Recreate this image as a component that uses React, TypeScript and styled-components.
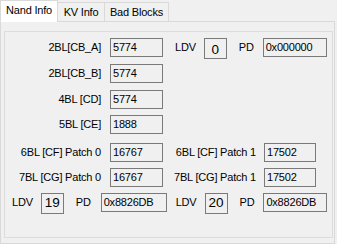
import React from "react";
import styled, { createGlobalStyle } from "styled-components";

const Global = createGlobalStyle`
  html, body { margin: 0; padding: 0; background: #f0f0f0; }
  body { font-family: "Liberation Sans", Arial, sans-serif; font-size: 11px; color: #000; letter-spacing: -0.2px; }
`;

const Window = styled.div`
  width: 337px;
  height: 244px;
  background: #f0f0f0;
  overflow: hidden;
`;

const TabStrip = styled.div`
  display: flex;
  align-items: flex-end;
  height: 22px;
  position: relative;
  z-index: 1;
`;

const Tab = styled.div<{ $active?: boolean; $w: number }>`
  box-sizing: border-box;
  width: ${(p) => p.$w}px;
  height: ${(p) => (p.$active ? 22 : 20)}px;
  background: ${(p) => (p.$active ? "#ffffff" : "#f0f0f0")};
  border: 1px solid #d9d9d9;
  border-bottom: ${(p) => (p.$active ? "1px solid #ffffff" : "1px solid #d9d9d9")};
  margin-left: ${(p) => (p.$active ? 0 : -1)}px;
  display: flex;
  align-items: center;
  justify-content: center;
  padding-bottom: ${(p) => (p.$active ? 2 : 0)}px;
  font-size: 11px;
`;

const Panel = styled.div`
  box-sizing: border-box;
  width: 335px;
  height: 223px;
  margin-top: -1px;
  border: 1px solid #d9d9d9;
  background: #f0f0f0;
  padding: 9px 1px 0 3px;
`;

const GroupBox = styled.div`
  box-sizing: border-box;
  width: 329px;
  height: 207px;
  border: 1px solid #dcdcdc;
  padding: 6px 0 0 0;
  display: flex;
  flex-direction: column;
`;

const Row = styled.div<{ $h: number }>`
  display: flex;
  align-items: flex-start;
  height: ${(p) => p.$h}px;
`;

const Label = styled.div<{ $w?: number; $ml?: number; $right?: boolean }>`
  box-sizing: border-box;
  ${(p) => (p.$w ? `width: ${p.$w}px;` : "")}
  margin-left: ${(p) => p.$ml ?? 0}px;
  text-align: ${(p) => (p.$right ? "right" : "left")};
  line-height: 19px;
  height: 19px;
  white-space: nowrap;
`;

const TextBox = styled.div<{ $w: number; $ml: number }>`
  box-sizing: border-box;
  width: ${(p) => p.$w}px;
  height: 19px;
  margin-left: ${(p) => p.$ml}px;
  border: 1px solid #7a7a7a;
  background: #f0f0f0;
  padding-left: 2px;
  line-height: 17px;
  white-space: nowrap;
`;

const NumBox = styled.div<{ $ml: number; $low?: boolean }>`
  box-sizing: border-box;
  width: 23px;
  height: 21px;
  margin-left: ${(p) => p.$ml}px;
  border: 1px solid #7a7a7a;
  background: #f0f0f0;
  font-size: 13.5px;
  letter-spacing: 0;
  text-align: center;
  line-height: ${(p) => (p.$low ? 22 : 18)}px;
`;

type LdvProps = { ldv: string; pd: string; start: number; low?: boolean; pdW: number; pdGap: number };

const LdvGroup: React.FC<LdvProps> = ({ ldv, pd, start, low, pdW, pdGap }) => (
  <>
    <Label $ml={start}>LDV</Label>
    <NumBox $ml={8} $low={low}>{ldv}</NumBox>
    <Label $ml={12}>PD</Label>
    <TextBox $w={pdW} $ml={pdGap}>{pd}</TextBox>
  </>
);

export default function App() {
  return (
    <Window>
      <Global />
      <TabStrip>
        <Tab $active $w={58}>Nand Info</Tab>
        <Tab $w={48}>KV Info</Tab>
        <Tab $w={65}>Bad Blocks</Tab>
      </TabStrip>
      <Panel>
        <GroupBox>
          <Row $h={26}>
            <Label $w={96} $right>2BL[CB_A]</Label>
            <TextBox $w={53} $ml={9}>5774</TextBox>
            <LdvGroup ldv="0" pd="0x000000" start={12} low pdW={64} pdGap={9} />
          </Row>
          <Row $h={26}>
            <Label $w={96} $right>2BL[CB_B]</Label>
            <TextBox $w={53} $ml={9}>5774</TextBox>
          </Row>
          <Row $h={25}>
            <Label $w={96} $right>4BL [CD]</Label>
            <TextBox $w={53} $ml={9}>5774</TextBox>
          </Row>
          <Row $h={28}>
            <Label $w={96} $right>5BL [CE]</Label>
            <TextBox $w={53} $ml={9}>1888</TextBox>
          </Row>
          <Row $h={25}>
            <Label $w={96} $right>6BL [CF] Patch 0</Label>
            <TextBox $w={53} $ml={9}>16767</TextBox>
            <Label $w={93} $right>6BL [CF] Patch 1</Label>
            <TextBox $w={52} $ml={8}>17502</TextBox>
          </Row>
          <Row $h={25}>
            <Label $w={96} $right>7BL [CG] Patch 0</Label>
            <TextBox $w={53} $ml={9}>16767</TextBox>
            <Label $w={93} $right>7BL [CG] Patch 1</Label>
            <TextBox $w={52} $ml={8}>17502</TextBox>
          </Row>
          <Row $h={22}>
            <LdvGroup ldv="19" pd="0x8826DB" start={7} pdW={66} pdGap={10} />
            <LdvGroup ldv="20" pd="0x8826DB" start={9} pdW={64} pdGap={9} />
          </Row>
        </GroupBox>
      </Panel>
    </Window>
  );
}
